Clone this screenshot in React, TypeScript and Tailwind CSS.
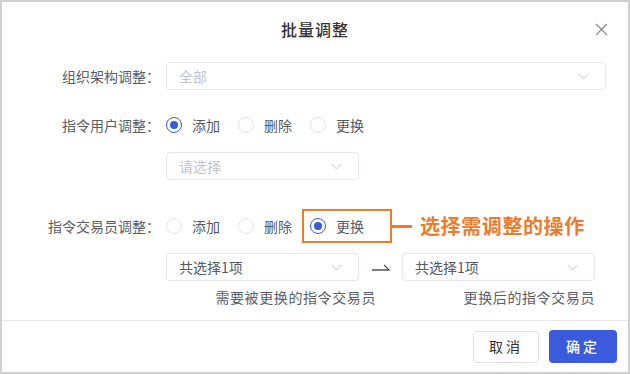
import React from "react"

const font = { fontFamily: '"Noto Sans CJK SC", "Noto Sans", sans-serif' }

function Chevron() {
  return (
    <svg width="11" height="7" viewBox="0 0 11 7" className="shrink-0">
      <path d="M0.5 0.8 L5.5 6 L10.5 0.8" fill="none" stroke="#c0c4cc" strokeWidth="1" />
    </svg>
  )
}

function Select(_props: { text: string; placeholder?: boolean; width: string }) {
  return (
    <div
      className={`${_props.width} h-[28px] flex items-center justify-between pl-[12px] pr-[16px] border border-[#e4e7ed] rounded-[4px] bg-white`}
    >
      <span className={`text-[14px] ${_props.placeholder ? "text-[#c0c4cc]" : "text-[#555a63]"}`}>
        {_props.text}
      </span>
      <Chevron />
    </div>
  )
}

function Radio(_props: { label: string; checked?: boolean }) {
  return (
    <div className="flex items-center gap-[10px] w-[72px]">
      {_props.checked ? (
        <span className="w-[16px] h-[16px] rounded-full border-[1.5px] border-[#3a5bdb] flex items-center justify-center shrink-0">
          <span className="w-[8px] h-[8px] rounded-full bg-[#3a5bdb]" />
        </span>
      ) : (
        <span className="w-[16px] h-[16px] rounded-full border border-[#e1e3ec] shrink-0" />
      )}
      <span className="text-[14px] text-[#555a63] whitespace-nowrap">{_props.label}</span>
    </div>
  )
}

function Row(_props: { label: string; children: React.ReactNode; className?: string }) {
  return (
    <div className={`flex items-center h-[28px] ${_props.className || ""}`}>
      <div className="w-[158px] text-right text-[14px] text-[#5a5e66] whitespace-nowrap">{_props.label}</div>
      <div className="ml-[6px] flex items-center">{_props.children}</div>
    </div>
  )
}

export default function App() {
  return (
    <div
      style={font}
      className="w-[630px] h-[374px] bg-white border-2 border-[#d0d0d0] flex flex-col overflow-hidden"
    >
      <header className="relative h-[54px] shrink-0 flex items-center justify-center">
        <h1 className="text-[16px] font-medium text-[#333] tracking-[1px]">批量调整</h1>
        <svg width="13" height="13" viewBox="0 0 13 13" className="absolute right-[20px] top-[21px]">
          <path d="M1 1 L12 12 M12 1 L1 12" stroke="#8d8d8d" strokeWidth="1.3" />
        </svg>
      </header>

      <div className="flex-1 flex flex-col">
        <Row label="组织架构调整：" className="mt-[6px]">
          <Select text="全部" placeholder width="w-[440px]" />
        </Row>

        <Row label="指令用户调整：" className="mt-[21px]">
          <Radio label="添加" checked />
          <Radio label="删除" />
          <Radio label="更换" />
        </Row>

        <div className="ml-[164px] mt-[13px]">
          <Select text="请选择" placeholder width="w-[193px]" />
        </div>

        <Row label="指令交易员调整：" className="mt-[32px] relative">
          <Radio label="添加" />
          <Radio label="删除" />
          <Radio label="更换" checked />
          {/* annotation overlay */}
          <div className="absolute left-[300px] top-[-3px] w-[90px] h-[34px] border-[2.5px] border-[#ee7b2c]" />
          <div className="absolute left-[390px] top-[13px] w-[20px] h-[2.5px] bg-[#ee7b2c]" />
          <div className="absolute left-[418px] top-[2px] text-[20px] leading-[24px] font-bold text-[#ee7b2c] tracking-[0.6px] whitespace-nowrap">
            选择需调整的操作
          </div>
        </Row>

        <div className="ml-[164px] mt-[13px] flex items-center">
          <Select text="共选择1项" width="w-[193px]" />
          <div className="w-[43px] flex justify-center">
            <svg width="19" height="8" viewBox="0 0 19 8">
              <path d="M1 7 H18 L13 2" fill="none" stroke="#555" strokeWidth="1.3" />
            </svg>
          </div>
          <Select text="共选择1项" width="w-[193px]" />
        </div>

        <div className="ml-[164px] mt-[6px] flex text-[14px] leading-[20px] text-[#5a5e66] whitespace-nowrap">
          <div className="w-[210px] text-right tracking-[0.6px]">需要被更换的指令交易员</div>
          <div className="w-[219px] text-right tracking-[0.6px]">更换后的指令交易员</div>
        </div>
      </div>

      <footer className="h-[52px] shrink-0 border-t border-[#e6e9f0] flex items-center justify-end gap-[10px] pr-[11px]">
        <button className="w-[66px] h-[32px] rounded-[4px] border border-[#dcdfe6] bg-white text-[14px] text-[#333] tracking-[3px]">
          取消
        </button>
        <button className="w-[68px] h-[33px] rounded-[4px] bg-[#3a5bdb] text-[14px] text-white font-medium tracking-[3px]">
          确定
        </button>
      </footer>
    </div>
  )
}
